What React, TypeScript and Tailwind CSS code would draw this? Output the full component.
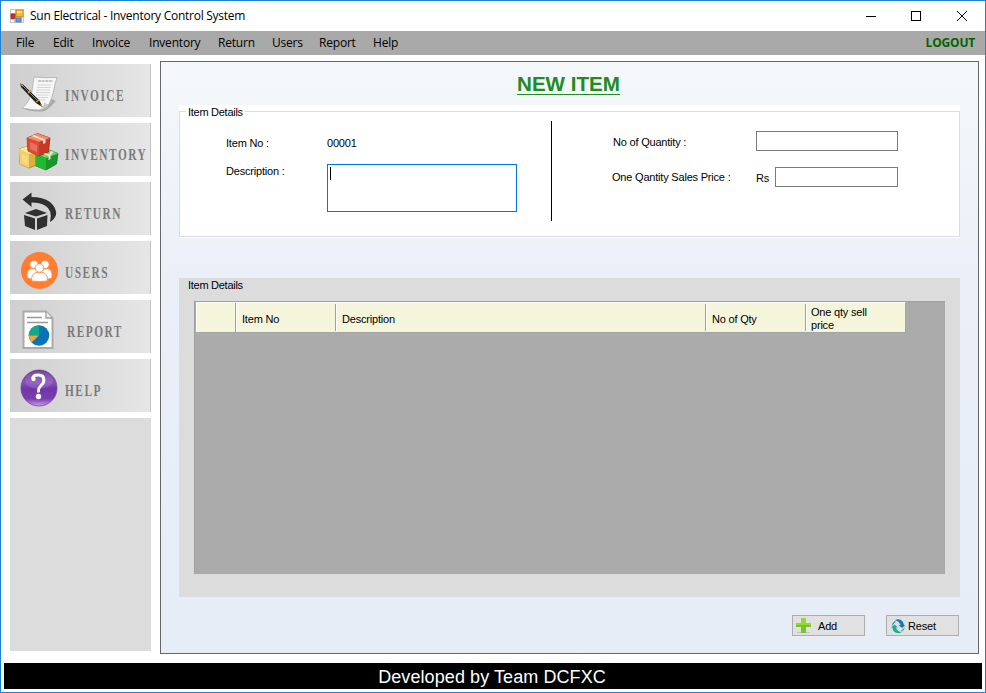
import type { ReactNode } from "react";

const menuItems = [
  { label: "File", width: "w-[37px]" },
  { label: "Edit", width: "w-[39px]" },
  { label: "Invoice", width: "w-[57px]" },
  { label: "Inventory", width: "w-[69px]" },
  { label: "Return", width: "w-[54px]" },
  { label: "Users", width: "w-[47px]" },
  { label: "Report", width: "w-[54px]" },
  { label: "Help", width: "w-[40px]" },
];

function AppIcon() {
  return (
    <svg width="14" height="14" viewBox="0 0 14 14" className="mr-[6px] shrink-0">
      <path d="M0 0h14v14H0z" fill="#c3c5c8" />
      <path d="M1 1h4v3H1zM1 11h3v2H1zM12 9h1v4h-1z" fill="#fff" />
      <rect x="6" y="1" width="7" height="6.5" fill="#f4bd2b" stroke="#c88a0c" strokeWidth=".8" />
      <path d="M7 2h5v2H7z" fill="#ffe58a" />
      <rect x="1" y="5" width="4" height="4.5" fill="#c3372c" stroke="#8c1915" strokeWidth=".7" />
      <rect x="6" y="9" width="5" height="4" fill="#5f9bea" stroke="#3a6fc4" strokeWidth=".7" />
    </svg>
  );
}

function InvoiceIcon() {
  return (
    <svg width="40" height="40" viewBox="0 0 40 40" className="shrink-0">
      <path d="M3 35Q14 40 26 38Q32 34 37 28L33 26L20 35Z" fill="#777" opacity=".45" />
      <path d="M15 4Q26 5 38 4.500Q36 10 35 16Q33 26 30 31Q27 36 20 37Q12 37 3 35Q11 29 13 18Z" fill="#f7f7f7" stroke="#a5a5a5" strokeWidth=".7" />
      <path d="M20 37Q25 36 25 29Q28 32 30 31Q27 36 20 37Z" fill="#c7c7c7" />
      <path d="M19 8l15 0" stroke="#888" strokeWidth=".9" strokeDasharray="3 .6" />
      <path d="M18 12l14 0M18 14.500l14 0M17 17l14 0M17 19.500l14 0M17 22l13 0M19 24.500l10 0M20 27l7 0" stroke="#c4c4c4" strokeWidth=".7" />
      <path d="M1 10.500L4 11.500L20 27L24 34.500L17 30L2 14Z" fill="#202020" />
      <path d="M3 12L19 28" stroke="#9a9a86" strokeWidth=".9" />
      <path d="M1.500 11.500l2.500 1.500M9 20l3-3M17 29l3-2M21.500 31.500l2 2.500" stroke="#cda93e" strokeWidth="1.100" />
    </svg>
  );
}

function InventoryIcon() {
  return (
    <svg width="40" height="40" viewBox="0 0 40 40" className="shrink-0">
      <path d="M0 17L10 14L20 19L18 33L10 36L1 32Z" fill="#dfad39" stroke="#a97920" strokeWidth=".7" />
      <path d="M0 17L10 14L20 19L10 22Z" fill="#ffeca4" />
      <path d="M0 17L10 22V36L1 32Z" fill="#f4cf68" />
      <path d="M17 22L28 17L39 21.500L37.500 32L27 38L17 34Z" fill="#18982c" stroke="#08701c" strokeWidth=".7" />
      <path d="M17 22L28 17L39 21.500L27 26Z" fill="#65dc62" />
      <path d="M17 22L27 26V38L17 34Z" fill="#24b82f" />
      <path d="M8 6L18.500 1.500L31 6L29.500 20L20 24L9 19Z" fill="#c63827" stroke="#942319" strokeWidth=".7" />
      <path d="M8 6L18.500 1.500L31 6L20 10Z" fill="#f58a6a" />
      <path d="M8 6L20 10V24L9 19Z" fill="#dd4a32" />
      <path d="M12.500 4L24 8.500V12l2.500-1V7.500L15 3ZM32 19l2.500 1-3 3.500v3.500l-2 1v-4l-5-2 2-1 3.500 1.500Z" fill="#f5e2cc" />
      <path d="M3 22l6 3v8l-6-3ZM11 10l7 3v7l-7-3Z" fill="#fff" opacity=".22" />
    </svg>
  );
}

function ReturnIcon() {
  return (
    <svg width="40" height="40" viewBox="0 0 40 40" className="shrink-0">
      <path d="M3.500 8.500L12.500 1.500V6Q24 6 31 11Q38 17 37 24Q35 29 31 31Q34 19 26 14.500Q21 11.500 12.500 11.500V16Z" fill="#303030" />
      <path d="M6 22L17 18L28 22L17 25.500Z" fill="#303030" />
      <path d="M5 24L16 27.500V39L6 35ZM18 27.500L28.500 24L28 35L18 39Z" fill="#303030" />
    </svg>
  );
}

function UsersIcon() {
  return (
    <svg width="40" height="40" viewBox="0 0 40 40" className="shrink-0">
      <circle cx="20.500" cy="20.500" r="18.500" fill="#ff7e32" />
      <g fill="#fff" stroke="#ff7e32" strokeWidth=".8">
        <circle cx="15" cy="14.500" r="4.200" />
        <circle cx="26" cy="14.500" r="4.200" />
        <path d="M8 28Q7 18 14 18.500Q19 18.500 20 27L19 29Q12 30 8 28ZM33 28Q34 18 27 18.500Q22 18.500 21 27L22 29Q29 30 33 28Z" />
        <path d="M12.500 31Q12 22 20.500 22Q29 22 28.500 31Q20.500 32 12.500 31Z" />
        <circle cx="20.500" cy="18" r="4.300" />
      </g>
    </svg>
  );
}

function ReportIcon() {
  return (
    <svg width="40" height="40" viewBox="0 0 40 40" className="shrink-0">
      <path d="M4.500 2.500H27L33.500 9V39H4.500Z" fill="#fff" stroke="#aaa" strokeWidth="2" />
      <path d="M27 2.500V9H33" fill="#eee" stroke="#999" strokeWidth="1.300" />
      <path d="M8 8.500H23M8 13.500H29" stroke="#999" strokeWidth="1.600" />
      <circle cx="20" cy="26.500" r="10.300" fill="#0873b9" />
      <path d="M20 26.500V16.200A10.300 10.300 0 0 0 9.700 26.500Z" fill="#13aa83" />
      <path d="M20 26.500H9.700Q9.700 30.500 12.500 33.500Z" fill="#f5a336" />
    </svg>
  );
}

function HelpIcon() {
  return (
    <svg width="40" height="40" viewBox="0 0 40 40" className="shrink-0">
      <defs>
        <linearGradient id="purple" x1="0" y1="0" x2="0" y2="1">
          <stop offset="0" stopColor="#613296" />
          <stop offset=".35" stopColor="#8b50bb" />
          <stop offset=".52" stopColor="#7036aa" />
          <stop offset=".8" stopColor="#7a3daf" />
          <stop offset="1" stopColor="#d19bea" />
        </linearGradient>
      </defs>
      <circle cx="20" cy="20" r="18" fill="url(#purple)" stroke="#6c4598" strokeWidth=".8" />
      <ellipse cx="20" cy="12" rx="14" ry="9" fill="#fff" opacity=".12" />
      <path d="M13.500 10.500Q14 7 19 7Q25 7 25 12Q25 15.500 22 17.500Q19 20 19.500 24.500" stroke="#fff" strokeWidth="2.800" fill="none" />
      <path d="M24 8Q28 13 23 17.500L21 19Q25 12 22 7Z" fill="#fff" />
      <circle cx="14.500" cy="11" r="2.200" fill="#fff" />
      <circle cx="19.500" cy="28.500" r="2.700" fill="#fff" />
    </svg>
  );
}

function NavButton({ icon, label, shift = "ml-[6px]" }: { icon: ReactNode; label: string; shift?: string }) {
  return (
    <button className="flex h-[53px] w-full shrink-0 items-center border-r border-[#c4c4c4] bg-gradient-to-r from-[#cfcfcf] to-[#e6e6e6] pt-[5px] pl-[9px]">
      {icon}
      <span className={`${shift} mt-[6px] origin-left scale-x-[0.71] font-['Liberation_Serif',serif] text-[16px] leading-5 font-bold tracking-[2.1px] text-[#7b7b7b]`}>
        {label}
      </span>
    </button>
  );
}

const columns = [
  { label: "Item No", width: "w-[100px]" },
  { label: "Description", width: "w-[370px]" },
  { label: "No of Qty", width: "w-[100px]" },
  { label: "One qty sell price", width: "w-[100px]" },
];

export default function App() {
  return (
    <div className="flex h-[693px] w-[986px] flex-col overflow-hidden border border-[#1883d7] bg-white font-['Liberation_Sans',Arial,sans-serif] text-[11px] tracking-[-0.2px] text-black">
      <header className="flex h-[30px] shrink-0 items-center pl-[9px] font-['Open_Sans',sans-serif] text-[12px] tracking-[-0.26px]">
        <AppIcon />
        <span>Sun Electrical - Inventory Control System</span>
        <svg className="mr-[16px] ml-auto" width="103" height="12" viewBox="0 0 103 12" shapeRendering="crispEdges">
          <path d="M0 6.500h10" stroke="#000" />
          <path d="M45.500 1.500h9v9h-9z" fill="none" stroke="#000" />
          <path d="M91 1l10 10M101 1l-10 10" stroke="#000" shapeRendering="auto" />
        </svg>
      </header>

      <nav className="flex h-6 shrink-0 items-center bg-[#a9a9a9] pr-[10px] pl-[15px] font-['Open_Sans',sans-serif] text-[12px] tracking-[-0.2px]">
        {menuItems.map((item) => (
          <span key={item.label} className={`${item.width} shrink-0`}>{item.label}</span>
        ))}
        <span className="ml-auto font-bold tracking-[-0.2px] text-[#006400]">LOGOUT</span>
      </nav>

      <div className="flex h-[608px] shrink-0 pt-[6px] pl-[9px]">
        <aside className="flex w-[141px] shrink-0 flex-col gap-[6px] pt-[3px]">
          <NavButton icon={<InvoiceIcon />} label="INVOICE" />
          <NavButton icon={<InventoryIcon />} label="INVENTORY" />
          <NavButton icon={<ReturnIcon />} label="RETURN" />
          <NavButton icon={<UsersIcon />} label="USERS" />
          <NavButton icon={<ReportIcon />} label="REPORT" shift="ml-[8px]" />
          <NavButton icon={<HelpIcon />} label="HELP" />
          <div className="h-[233px] shrink-0 bg-[#dcdcdc]" />
        </aside>

        <main className="ml-[9px] flex h-[593px] w-[819px] flex-col border border-[#646669] bg-gradient-to-b from-[#f4f8fa] via-[#eaeff8] via-40% to-[#e6edf7] px-[18px]">
          <h1 className="flex h-[43px] justify-center pt-[12px] pr-[2px] text-[20.6px] font-bold tracking-normal text-[#228b22]">
            <span className="h-[21px] border-b border-[#228b22] leading-[20px]">NEW ITEM</span>
          </h1>

          <section className="h-[133px] shrink-0 bg-white">
            <fieldset className="h-[132px] border border-[#dcdcdc]">
              <legend className="ml-[6px] h-[13px] px-[2px] leading-[15px] tracking-[-0.27px]">Item Details</legend>
              <div className="flex pt-[3px]">
                <div className="flex h-[100px] w-[372px] flex-col border-r border-black pl-[46px]">
                  <div className="flex pt-[14px] leading-[16px]">
                    <span className="w-[101px]">Item No :</span>
                    <span>00001</span>
                  </div>
                  <div className="flex pt-[13px]">
                    <span className="w-[101px] leading-[15px]">Description :</span>
                    <div className="h-[48px] w-[190px] border border-[#0078d7] bg-white pt-[2px] pl-[2px]">
                      <div className="h-[13px] w-px bg-black" />
                    </div>
                  </div>
                </div>
                <div className="flex flex-col gap-[16px] pt-[10px] pl-[60px]">
                  <div className="flex h-[20px] items-center">
                    <label className="w-[144px] pt-[2px] pl-px">No of Quantity :</label>
                    <input aria-label="No of Quantity" className="h-[20px] w-[142px] border border-[#7a7a7a] bg-white" />
                  </div>
                  <div className="flex h-[20px] items-center">
                    <label className="w-[144px] pt-px">One Qantity Sales Price :</label>
                    <span className="w-[19px] pt-[2px]">Rs</span>
                    <input aria-label="One quantity sales price" className="h-[20px] w-[123px] border border-[#7a7a7a] bg-white" />
                  </div>
                </div>
              </div>
            </fieldset>
          </section>

          <section className="mt-[40px] h-[319px] shrink-0 bg-[#dcdcdc] px-[15px]">
            <h2 className="ml-[-6px] h-[23px] pt-px leading-[13px] tracking-[-0.27px]">Item Details</h2>
            <div className="h-[273px] w-[751px] border border-[#a9a9a9] border-t-[#a0a0a0] border-l-[#a0a0a0] bg-[#ababab] pl-px">
              <div className="flex h-[31px] w-[710px] items-center border-t border-r border-b border-[#a0a5a5] border-t-white bg-[#f5f5dc]">
                <div className="h-full w-[39px] border-l border-white" />
                {columns.map((column, index) => (
                  <div
                    key={column.label}
                    className={`${column.width} ${index === 0 ? "h-full" : "h-[27px]"} flex shrink-0 items-center border-l border-[#a0a0a0]`}
                  >
                    <div className={`${index === 3 ? "pl-[4px]" : "pl-[5px]"} flex h-full w-full items-center border-l border-white pt-[3px] pr-[20px] leading-[13px]`}>
                      {column.label}
                    </div>
                  </div>
                ))}
              </div>
            </div>
          </section>

          <div className="mt-[18px] flex justify-end gap-[21px] pr-px">
            <button className="flex h-[21px] w-[73px] items-center border border-[#adadad] bg-[#e1e1e1] pl-[2px] tracking-[-0.2px]">
              <svg width="17" height="17" viewBox="0 0 17 17" className="mr-[6px]">
                <path d="M2 15.500h13" stroke="#c4c4c4" />
                <path d="M6 1h5v5h5v4h-5v6H6v-6H1V6h5z" fill="#76c52a" />
                <path d="M6 1h5v5h5v2H1V6h5z" fill="#92da30" />
              </svg>
              <span className="pt-px">Add</span>
            </button>
            <button className="flex h-[21px] w-[73px] items-center border border-[#adadad] bg-[#e1e1e1] pl-[3px] tracking-[-0.2px]">
              <svg width="16" height="16" viewBox="0 0 16 16" className="mr-[2px]">
                <path d="M5 2Q8 .5 11 2Q14 4 14 7H15.500L12 10L8.500 7H10.500Q9.500 3.500 5 2Z" fill="#1378be" />
                <path d="M11.500 14.500Q8.500 16 5.500 14.500Q2.500 13 2.500 9.500H1L4.500 6.500L8 9.500H6Q7 13 11.500 14.500Z" fill="#16b194" />
                <path d="M5 3Q2 5 1.500 8L3.500 6Q4 4.500 6 3.500Z" fill="#1378be" />
                <path d="M11.500 13.500Q14.500 12 15 9L13 11Q12.500 12 10.500 13Z" fill="#16b194" />
              </svg>
              <span className="pt-px">Reset</span>
            </button>
          </div>
        </main>
      </div>

      <footer className="mr-[3px] ml-[3px] flex h-[26px] shrink-0 items-center justify-center bg-black text-[18px] tracking-[0.08px] text-white">
        <span className="mt-[2px] mr-[2px]">Developed by Team DCFXC</span>
      </footer>
    </div>
  );
}
